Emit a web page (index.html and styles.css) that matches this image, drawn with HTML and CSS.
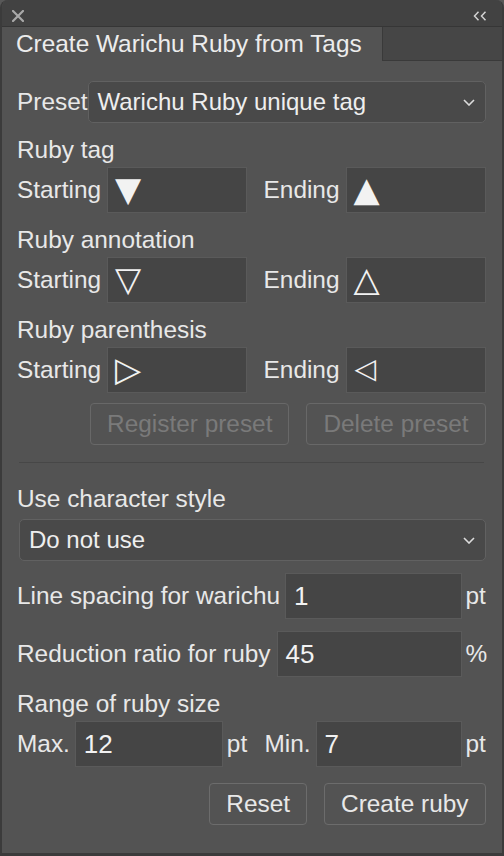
FILE: index.html
```html
<!DOCTYPE html>
<html>
<head>
<meta charset="utf-8">
<link rel="stylesheet" href="styles.css">
</head>
<body>
<div class="window">
  <div class="titlebar">
    <svg class="icon-close" width="12" height="12" viewBox="0 0 12 12"><path d="M1 1L11 11M11 1L1 11" stroke="#a9a9a9" stroke-width="2.2" stroke-linecap="square" fill="none"/></svg>
    <svg class="icon-collapse" width="16" height="10" viewBox="0 0 16 10"><path d="M5.5 0.8L1.5 5L5.5 9.2M12.5 0.8L8.5 5L12.5 9.2" stroke="#d2d2d2" stroke-width="1.5" fill="none"/></svg>
  </div>
  <div class="tabs">
    <div class="tab">Create Warichu Ruby from Tags</div>
    <div class="tab-fill"></div>
  </div>
  <div class="panel">
    <div class="row">
      <span class="label">Preset</span>
      <div class="select select-preset">
        <span>Warichu Ruby unique tag</span>
        <svg class="chevron" width="12" height="7" viewBox="0 0 12 7"><path d="M1 1L6 6L11 1" stroke="#dcdcdc" stroke-width="1.6" fill="none"/></svg>
      </div>
    </div>

    <div class="heading">Ruby tag</div>
    <div class="pair">
      <div class="group"><span class="label">Starting</span><div class="field field-tri">▼</div></div>
      <div class="group"><span class="label">Ending</span><div class="field field-tri">▲</div></div>
    </div>

    <div class="heading">Ruby annotation</div>
    <div class="pair">
      <div class="group"><span class="label">Starting</span><div class="field field-tri">▽</div></div>
      <div class="group"><span class="label">Ending</span><div class="field field-tri">△</div></div>
    </div>

    <div class="heading">Ruby parenthesis</div>
    <div class="pair">
      <div class="group"><span class="label">Starting</span><div class="field field-tri">▷</div></div>
      <div class="group"><span class="label">Ending</span><div class="field field-tri tri-small">◁</div></div>
    </div>

    <div class="buttons buttons-preset">
      <button class="btn" disabled>Register preset</button>
      <button class="btn" disabled>Delete preset</button>
    </div>

    <div class="separator"></div>

    <div class="heading heading-style">Use character style</div>
    <div class="select select-style">
      <span>Do not use</span>
      <svg class="chevron" width="12" height="7" viewBox="0 0 12 7"><path d="M1 1L6 6L11 1" stroke="#dcdcdc" stroke-width="1.6" fill="none"/></svg>
    </div>

    <div class="row row-input">
      <span class="label">Line spacing for warichu</span>
      <div class="field field-grow field-ls">1</div>
      <span class="unit">pt</span>
    </div>
    <div class="row row-input">
      <span class="label">Reduction ratio for ruby</span>
      <div class="field field-grow">45</div>
      <span class="unit">%</span>
    </div>

    <div class="heading">Range of ruby size</div>
    <div class="pair">
      <div class="group"><span class="label">Max.</span><div class="field field-max">12</div><span class="unit">pt</span></div>
      <div class="group"><span class="label">Min.</span><div class="field field-min">7</div><span class="unit">pt</span></div>
    </div>

    <div class="buttons buttons-main">
      <button class="btn">Reset</button>
      <button class="btn">Create ruby</button>
    </div>
  </div>
</div>
</body>
</html>
```
FILE: styles.css
```css
html, body {
  margin: 0;
  padding: 0;
  background: #585858;
}

.window {
  width: 504px;
  height: 856px;
  box-sizing: border-box;
  background: #535353;
  border-left: 2px solid #3b3b3b;
  border-right: 2px solid #3b3b3b;
  border-bottom: 3px solid #3b3b3b;
  border-radius: 8px 8px 0 0;
  overflow: hidden;
  display: flex;
  flex-direction: column;
  font-family: "Liberation Sans", Arial, sans-serif;
  color: #e8e8e8;
}

.titlebar {
  flex: none;
  background: #424242;
  border-bottom: 1px solid #363636;
  display: flex;
  justify-content: space-between;
  align-items: flex-start;
  padding: 10px 13px 0 10px;
  box-sizing: content-box;
  height: 16px;
}

.icon-collapse {
  margin-top: 1px;
}

.tabs {
  height: 34px;
  flex: none;
  display: flex;
}

.tab {
  width: 380px;
  flex: none;
  background: #535353;
  box-sizing: border-box;
  padding-left: 14px;
  font-size: 24.4px;
  line-height: 34px;
  color: #ececec;
  white-space: nowrap;
}

.tab-fill {
  flex: 1;
  background: #464646;
  border-left: 1px solid #3a3a3a;
  border-bottom: 1px solid #3a3a3a;
}

.panel {
  flex: 1;
  padding: 20px 16.5px 0 15px;
}

.label {
  font-size: 24.4px;
  line-height: 28px;
  white-space: nowrap;
}

.row {
  display: flex;
  align-items: center;
}

.select {
  height: 42px;
  box-sizing: border-box;
  border: 1px solid #616161;
  border-radius: 5px;
  background: #494949;
  display: flex;
  align-items: center;
  padding: 0 10px 0 9px;
  font-size: 24px;
  color: #eeeeee;
  white-space: nowrap;
}

.select-preset {
  flex: 1;
}

.select-style {
  margin-left: 2px;
  margin-top: 6px;
}

.chevron {
  margin-left: auto;
  flex: none;
}

.heading {
  font-size: 24.4px;
  line-height: 28px;
  margin-top: 13px;
}

.heading-style {
  margin-top: 22px;
}

.pair {
  margin-top: 3px;
  display: flex;
  justify-content: space-between;
  align-items: center;
  height: 46px;
}

.group {
  display: flex;
  align-items: center;
}

.field {
  height: 46px;
  box-sizing: border-box;
  background: #454545;
  border: 1px solid #5a5a5a;
  display: flex;
  align-items: center;
  padding-left: 8px;
  font-size: 26px;
  color: #f2f2f2;
  overflow: hidden;
}

.group .field {
  width: 140px;
  margin-left: 6px;
}

.field-tri {
  font-family: "DejaVu Sans", sans-serif;
  font-size: 34px;
  line-height: 44px;
  padding-left: 7px;
  padding-bottom: 3px;
}

.tri-small {
  font-size: 28px;
  padding-left: 8px;
}

.group .field-max {
  width: 148px;
  margin-left: 5px;
}

.group .field-min {
  width: 146px;
  margin-left: 5px;
}

.unit {
  font-size: 24.4px;
  width: 20px;
  margin-left: 4px;
  flex: none;
}

.row-input {
  margin-top: 12px;
}

.field-grow {
  flex: 1;
  margin-left: 6px;
}

.field-ls {
  margin-left: 5px;
}

.buttons {
  display: flex;
  justify-content: flex-end;
  gap: 17px;
}

.buttons-preset {
  margin-top: 10px;
}

.buttons-main {
  margin-top: 16px;
}

.btn {
  height: 42px;
  padding: 0 16px;
  border: 1px solid #6c6c6c;
  border-radius: 4px;
  background: transparent;
  font-family: "Liberation Sans", Arial, sans-serif;
  font-size: 24.4px;
  color: #e8e8e8;
  white-space: nowrap;
}

.btn:disabled {
  color: #7a7a7a;
  border-color: #686868;
}

.separator {
  margin: 17px 2px 0 2px;
  height: 1px;
  background: #474747;
}
```
